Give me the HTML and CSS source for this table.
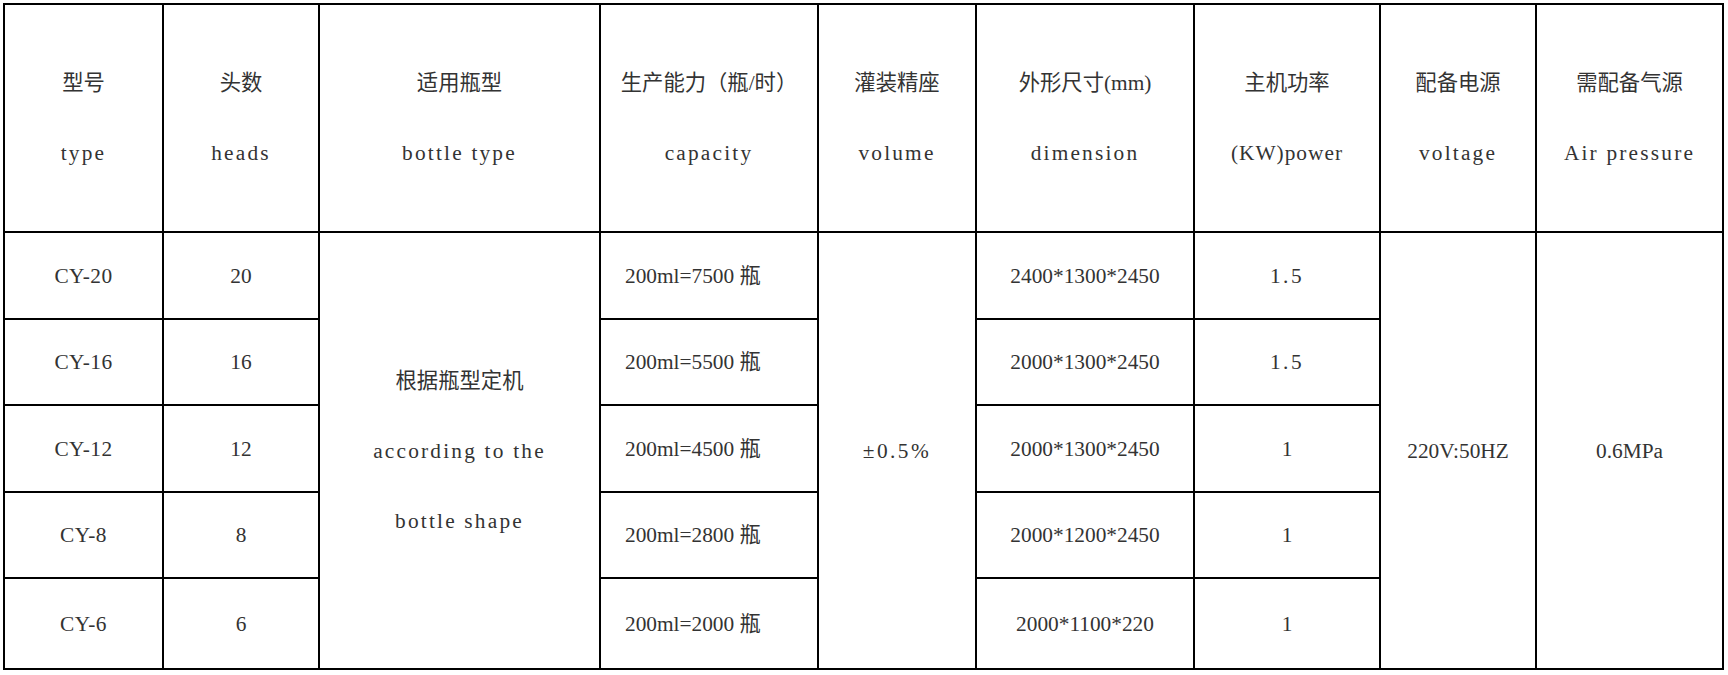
FILE: index.html
```html
<!DOCTYPE html>
<html lang="zh-CN">
<head>
<meta charset="utf-8">
<title>灌装机参数</title>
<link rel="stylesheet" href="styles.css">
</head>
<body>
<table class="spec">
  <colgroup>
    <col class="c1"><col class="c2"><col class="c3"><col class="c4"><col class="c5"><col class="c6"><col class="c7"><col class="c8"><col class="c9">
  </colgroup>
  <thead>
    <tr class="head-row">
      <th><div class="ln">型号</div><div class="ln"><span class="en">type</span></div></th>
      <th><div class="ln">头数</div><div class="ln"><span class="en">heads</span></div></th>
      <th><div class="ln">适用瓶型</div><div class="ln"><span class="en">bottle type</span></div></th>
      <th><div class="ln">生产能力（瓶/时）</div><div class="ln"><span class="en">capacity</span></div></th>
      <th><div class="ln">灌装精座</div><div class="ln"><span class="en">volume</span></div></th>
      <th><div class="ln">外形尺寸(mm)</div><div class="ln"><span class="en">dimension</span></div></th>
      <th><div class="ln">主机功率</div><div class="ln"><span class="tight">(KW)power</span></div></th>
      <th><div class="ln">配备电源</div><div class="ln"><span class="en">voltage</span></div></th>
      <th><div class="ln">需配备气源</div><div class="ln"><span class="en">Air pressure</span></div></th>
    </tr>
  </thead>
  <tbody>
    <tr class="r1">
      <td><span class="id">CY-20</span></td>
      <td>20</td>
      <td rowspan="5"><div class="ln">根据瓶型定机</div><div class="ln"><span class="en">according to the</span></div><div class="ln"><span class="en">bottle shape</span></div></td>
      <td class="cap">200ml=7500 瓶</td>
      <td rowspan="5"><span class="wide">±0.5%</span></td>
      <td>2400*1300*2450</td>
      <td><span class="wide">1.5</span></td>
      <td rowspan="5">220V:50HZ</td>
      <td rowspan="5">0.6MPa</td>
    </tr>
    <tr class="r2">
      <td><span class="id">CY-16</span></td>
      <td>16</td>
      <td class="cap">200ml=5500 瓶</td>
      <td>2000*1300*2450</td>
      <td><span class="wide">1.5</span></td>
    </tr>
    <tr class="r3">
      <td><span class="id">CY-12</span></td>
      <td>12</td>
      <td class="cap">200ml=4500 瓶</td>
      <td>2000*1300*2450</td>
      <td>1</td>
    </tr>
    <tr class="r4">
      <td><span class="id">CY-8</span></td>
      <td>8</td>
      <td class="cap">200ml=2800 瓶</td>
      <td>2000*1200*2450</td>
      <td>1</td>
    </tr>
    <tr class="r5">
      <td><span class="id">CY-6</span></td>
      <td>6</td>
      <td class="cap">200ml=2000 瓶</td>
      <td>2000*1100*220</td>
      <td>1</td>
    </tr>
  </tbody>
</table>
</body>
</html>
```

FILE: styles.css
```css
html, body {
  background: #ffffff;
}
body {
  margin: 3px;
  font-family: "Liberation Serif", "Noto Sans CJK SC", serif;
  font-size: 21.33px;
  color: #333333;
}
.spec {
  border-collapse: collapse;
  table-layout: fixed;
  width: 1721px;
}
.spec th,
.spec td {
  border: 2px solid #000;
  padding: 0;
  text-align: center;
  vertical-align: middle;
  font-weight: normal;
  line-height: 30px;
}
.c1 { width: 159px; }
.c2 { width: 156px; }
.c3 { width: 281px; }
.c4 { width: 218px; }
.c5 { width: 158px; }
.c6 { width: 218px; }
.c7 { width: 186px; }
.c8 { width: 156px; }
.c9 { width: 187px; }
.head-row { height: 228px; }
.r1 { height: 87px; }
.r2 { height: 86px; }
.r3 { height: 87px; }
.r4 { height: 86px; }
.r5 { height: 91px; }
.ln {
  line-height: 70px;
  white-space: nowrap;
}
.en {
  letter-spacing: 2.2px;
}
.tight {
  letter-spacing: 1px;
}
.wide {
  letter-spacing: 2.5px;
}
.id {
  letter-spacing: 0.5px;
}
.spec td.cap {
  text-align: left;
  padding-left: 24px;
}
```
